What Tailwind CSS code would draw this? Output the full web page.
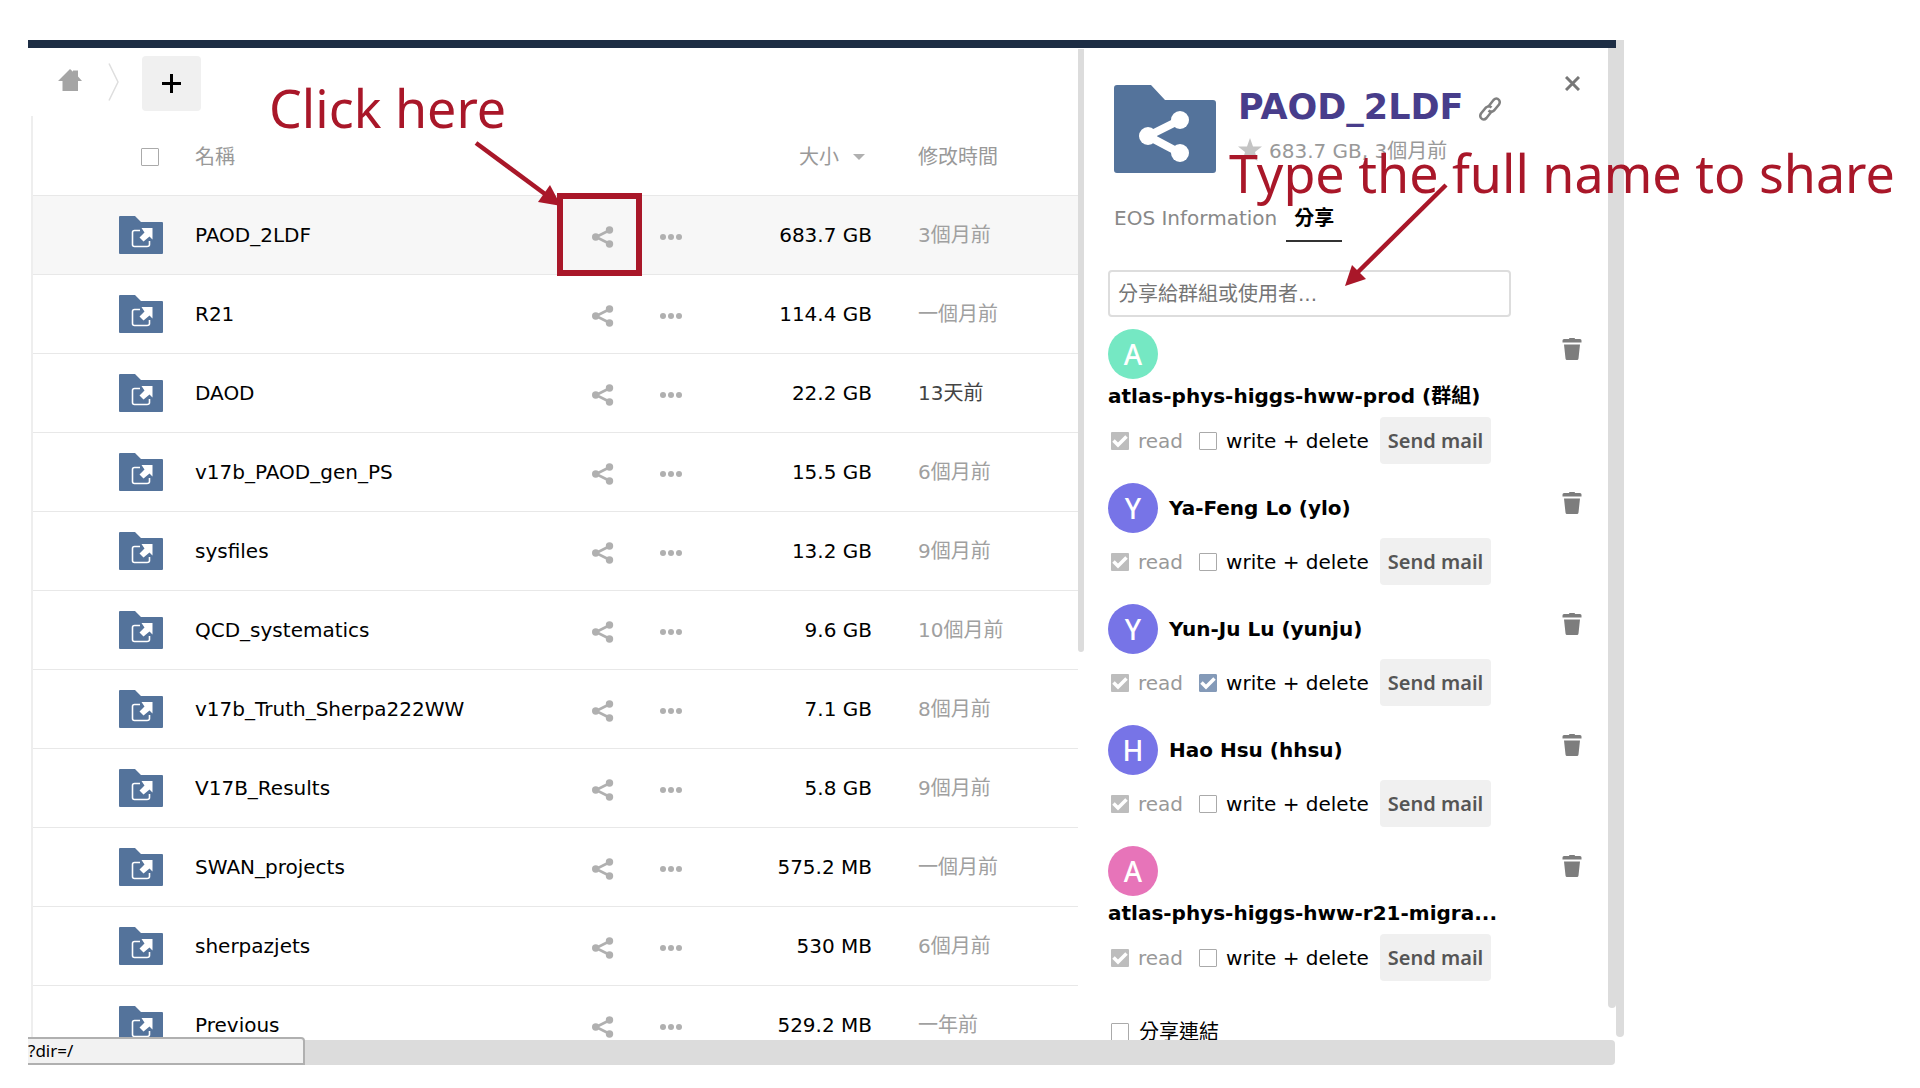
<!DOCTYPE html>
<html lang="zh-Hant">
<head>
<meta charset="utf-8">
<title>Files</title>
<script src="https://cdn.jsdelivr.net/npm/@tailwindcss/browser@4"></script>
</head>
<body class="bg-white text-black text-[20px] leading-[30px] font-['DejaVu_Sans','Noto_Sans_CJK_TC',sans-serif]">
<svg class="hidden">
  <symbol id="folder-link" viewBox="0 0 44 38">
    <path fill="#54739b" d="M1 0H16L22 6H43Q44 6 44 7V37Q44 38 43 38H1Q0 38 0 37V1Q0 0 1 0Z"/>
    <path fill="none" stroke="#fff" stroke-width="1.6" d="M21 14.500H15.500Q13.500 14.500 13.500 16.500V28.500Q13.500 30.500 15.500 30.500H28Q30.500 30.500 30.500 28.500V25"/>
    <path fill="#fff" d="M22.500 12H33.500V23.500L30.500 20.500L24.500 25.500L20.500 21.500L25.500 16.500Z"/>
  </symbol>
  <symbol id="share" viewBox="0 0 22 22">
    <path fill="none" stroke="currentColor" stroke-width="2.6" d="M18 4L4 11L18 18"/>
    <circle cx="17.500" cy="4" r="3.700" fill="currentColor"/><circle cx="3.700" cy="11" r="3.700" fill="currentColor"/><circle cx="17.500" cy="18" r="3.700" fill="currentColor"/>
  </symbol>
  <symbol id="dots" viewBox="0 0 22 6">
    <circle cx="3" cy="3" r="3" fill="currentColor"/><circle cx="11" cy="3" r="3" fill="currentColor"/><circle cx="19" cy="3" r="3" fill="currentColor"/>
  </symbol>
  <symbol id="trash" viewBox="0 0 20 22">
    <path fill="currentColor" d="M7 0.500Q7 0 8 0H12Q13 0 13 0.500V1H18Q19.500 1 19.500 2.500V4.500H0.500V2.500Q0.500 1 2 1H7ZM2 6.500H18L16.500 20.500Q16.300 22 15 22H5Q3.700 22 3.500 20.500Z"/>
  </symbol>
  <symbol id="check" viewBox="0 0 18 18"><path fill="none" stroke="#fff" stroke-width="3.500" d="M2.500 8.500L7 13L15.500 4.500"/></symbol>
</svg>

<div class="h-screen flex flex-col pt-[40px] pb-[23px] pl-[28px] pr-[296px] overflow-hidden">
  <div class="flex flex-1 min-h-0">
    <div class="flex flex-col flex-1 min-w-0">
      <header class="h-[8px] shrink-0 bg-[#1d2d44]"></header>
      <div class="flex flex-1 min-h-0">

        <main class="relative flex-1 min-w-0 overflow-hidden">
          <nav class="flex items-start h-[68px] pl-[30px] pt-[8px]">
            <a href="#" aria-label="Home" class="mt-[13px] text-[#a5a5a5]"><svg width="24" height="22" viewBox="0 0 24 22"><path fill="currentColor" d="M12 0L15 2.800V1.500H20V7.500L24 12H20V22H4.500V12H0Z"/></svg></a>
            <svg class="ml-[26px] mt-[7px]" width="11" height="38" viewBox="0 0 11 38"><path fill="none" stroke="#dedede" stroke-width="1.500" d="M1 0.500L10 19L1 37.500"/></svg>
            <button aria-label="New" class="ml-[23px] w-[59px] h-[55px] grid place-items-center rounded bg-[#f0f0f0]"><svg width="19" height="19" viewBox="0 0 19 19"><path stroke="#000" stroke-width="3" d="M9.500 0V19M0 9.500H19"/></svg></button>
          </nav>
          <div class="ml-[3px] border-l-2 border-[#eee]">
            <table class="w-full table-fixed border-collapse">
              <thead class="text-[#999]">
                <tr class="h-[79px] border-b border-[#e8e8e8]">
                  <th class="w-[162px] font-normal text-left pl-[108px] pt-1"><input type="checkbox" aria-label="Select all" class="block appearance-none size-[18px] border border-[#aaa] rounded-[1px]"></th>
                  <th class="font-normal text-left pt-1">名稱</th>
                  <th class="w-[85px]"></th>
                  <th class="w-[58px]"></th>
                  <th class="w-[172px] font-normal pt-1"><span class="flex items-center justify-end gap-[14px] pr-[7px]">大小<svg width="12" height="6" viewBox="0 0 12 6"><path fill="#b0b0b0" d="M0 0H12L6 6Z"/></svg></span></th>
                  <th class="w-[206px] font-normal text-left pl-[46px] pt-1">修改時間</th>
                </tr>
              </thead>
              <tbody id="files"></tbody>
            </table>
          </div>
          <div class="absolute left-[241px] top-[26px] text-[52px] leading-[68px] text-[#a91729] whitespace-nowrap font-['Chalkboard','Noto_Sans',cursive]">Click here</div>
          <svg class="absolute left-[442px] top-[90px] text-[#a91729]" width="90" height="70" viewBox="0 0 90 70"><path stroke="currentColor" stroke-width="4.500" d="M6 5L75 56"/><path fill="currentColor" d="M91 68L68 64L80 47Z"/></svg>
        </main>

        <aside class="relative w-[538px] shrink-0 flex">
          <div class="w-[6px] h-[603px] mt-px bg-[#dcdcdc] rounded-b"></div>
          <div class="flex-1 min-w-0 overflow-hidden pl-[24px] pt-[37px]">
            <div class="flex items-start pl-[6px]">
              <svg width="102" height="88" viewBox="0 0 102 88"><path fill="#54739b" d="M3 0H37L51 15H99Q102 15 102 18V85Q102 88 99 88H3Q0 88 0 85V3Q0 0 3 0Z"/><path fill="none" stroke="#fff" stroke-width="8" d="M66 35L34 51L66 68"/><g fill="#fff"><circle cx="66" cy="35" r="9"/><circle cx="34" cy="51" r="9"/><circle cx="66" cy="68" r="9"/></g></svg>
              <div class="ml-[22px]">
                <h2 class="flex items-center h-[44px] text-[35px] font-bold text-[#483d8b]">PAOD_2LDF
                  <a href="#" aria-label="Link" class="ml-[16px] mt-[4px] text-[#808080]"><svg width="22" height="24" viewBox="0 0 22 24" fill="none" stroke="currentColor" stroke-width="2.500"><path d="M9 10L14.500 3Q17.500 0 20 3Q21.500 5 20 7.500L15 13.500Q12 16 9.500 13.500"/><path d="M13 14L7.500 21Q4.500 24 2 21Q0.500 19 2 16.500L7 10.500Q10 8 12.500 10.500"/></svg></a></h2>
                <p class="flex items-center h-[44px] gap-[7px] text-[#999]"><svg class="mb-[4px]" width="24" height="23" viewBox="0 0 24 23"><path fill="#c4c4c4" d="M12 0L15 8.500H24L17 14L19.500 23L12 17.500L4.500 23L7 14L0 8.500H9Z"/></svg>683.7 GB, 3個月前</p>
              </div>
              <button aria-label="Close" class="ml-auto mr-[28px] -mt-[9px] text-[#777]"><svg width="15" height="15" viewBox="0 0 15 15"><path stroke="currentColor" stroke-width="3" d="M1 1L14 14M14 1L1 14"/></svg></button>
            </div>
            <div class="flex mt-[25px] pl-[6px] h-[44px] text-[#888]">
              <a href="#" class="leading-[40px] mr-[9px]">EOS Information</a>
              <a href="#" class="leading-[40px] px-[8px] font-bold text-black border-b-2 border-[#333]">分享</a>
            </div>
            <input type="text" aria-label="Share" placeholder="分享給群組或使用者..." class="block mt-[28px] w-[403px] h-[47px] px-[8px] border-2 border-[#ddd] rounded placeholder:text-[#757575]">
            <ul id="shares" class="mt-[12px]"></ul>
            <label class="flex items-center mt-[31px] ml-[3px] gap-[10px] h-[40px]"><input type="checkbox" class="appearance-none size-[18px] border border-[#aaa] rounded-[1px]">分享連結</label>
          </div>
          <div class="w-[8px] h-[960px] bg-[#dcdcdc] rounded-b"></div>
          <div class="absolute left-[151px] top-[91px] text-[52px] leading-[68px] text-[#a91729] whitespace-nowrap font-['Chalkboard','Noto_Sans',cursive]">Type the full name to share</div>
          <svg class="absolute left-[265px] top-[134px] text-[#a91729]" width="110" height="105" viewBox="0 0 110 105"><path stroke="currentColor" stroke-width="4.500" d="M103 3L14 91"/><path fill="currentColor" d="M2 104L9 83L23 97Z"/></svg>
        </aside>
      </div>
    </div>
    <div class="w-[8px] h-[997px] shrink-0 bg-[#dcdcdc] rounded-b"></div>
  </div>
  <footer class="relative h-[25px] shrink-0 mr-[9px] bg-[#dcdcdc] rounded-r">
    <div class="absolute left-0 bottom-0 w-[277px] h-[28px] overflow-hidden bg-[#f2f2f2] border-2 border-l-0 border-[#b0b0b0] rounded-tr text-[17px] leading-[24px] font-['Noto_Sans',sans-serif]">?dir=/</div>
  </footer>
</div>

<script>
const files = [
  ['PAOD_2LDF','683.7 GB','3個月前'],['R21','114.4 GB','一個月前'],['DAOD','22.2 GB','13天前'],
  ['v17b_PAOD_gen_PS','15.5 GB','6個月前'],['sysfiles','13.2 GB','9個月前'],['QCD_systematics','9.6 GB','10個月前'],
  ['v17b_Truth_Sherpa222WW','7.1 GB','8個月前'],['V17B_Results','5.8 GB','9個月前'],['SWAN_projects','575.2 MB','一個月前'],
  ['sherpazjets','530 MB','6個月前'],['Previous','529.2 MB','一年前']
];
document.getElementById('files').innerHTML = files.map(([name, size, date], i) => `
  <tr class="h-[79px] border-b border-[#e8e8e8] ${i === 0 ? 'bg-[#f7f7f7]' : ''}">
    <td class="pl-[86px]"><svg width="44" height="38"><use href="#folder-link"/></svg></td>
    <td><a href="#">${name}</a></td>
    <td class="relative text-[#b0b0b0]"><button aria-label="Share" class="block ml-[35px] mt-[5px]"><svg width="22" height="22"><use href="#share"/></svg></button>${i === 0 ? '<div class="absolute left-0 -top-[3px] w-[85px] h-[83px] border-6 border-[#a91729]"></div>' : ''}</td>
    <td class="text-[#b0b0b0]"><button aria-label="More" class="block ml-[18px] mt-[5px]"><svg width="22" height="6"><use href="#dots"/></svg></button></td>
    <td class="text-right">${size}</td>
    <td class="pl-[46px] ${i === 2 ? 'text-[#444]' : 'text-[#a0a0a0]'}">${date}</td>
  </tr>`).join('');

const shares = [
  ['A','bg-[#75e8c3]','atlas-phys-higgs-hww-prod (群組)',true,false],
  ['Y','bg-[#7774e7]','Ya-Feng Lo (ylo)',false,false],
  ['Y','bg-[#7774e7]','Yun-Ju Lu (yunju)',false,true],
  ['H','bg-[#7774e7]','Hao Hsu (hhsu)',false,false],
  ['A','bg-[#e774b9]','atlas-phys-higgs-hww-r21-migra...',true,false]
];
document.getElementById('shares').innerHTML = shares.map(([letter, color, name, wraps, write]) => `
  <li class="mb-[19px]">
    <div class="flex items-start">
      <div class="${wraps ? 'flex flex-col gap-[2px]' : 'flex items-center gap-[11px]'}">
        <span class="grid place-items-center size-[50px] rounded-full text-white text-[28px] font-medium font-['Noto_Sans',sans-serif] ${color}">${letter}</span>
        <span class="leading-[31px] font-bold whitespace-nowrap">${name}</span>
      </div>
      <button aria-label="Unshare" class="ml-auto mr-[26px] mt-[9px] text-[#7d7d7d]"><svg width="20" height="22"><use href="#trash"/></svg></button>
    </div>
    <div class="flex items-center mt-[5px] pl-[3px]">
      <label class="flex items-center gap-[9px] text-[#999]"><span class="grid place-items-center"><input type="checkbox" checked disabled class="appearance-none size-[18px] bg-[#bdbdbd] rounded-[1px] col-start-1 row-start-1"><svg class="col-start-1 row-start-1" width="18" height="18"><use href="#check"/></svg></span>read</label>
      <label class="flex items-center gap-[9px] ml-[16px]"><span class="grid place-items-center"><input type="checkbox" ${write ? 'checked' : ''} class="appearance-none size-[18px] border border-[#aaa] checked:border-[#849ab8] checked:bg-[#849ab8] rounded-[1px] col-start-1 row-start-1">${write ? '<svg class="col-start-1 row-start-1 pointer-events-none" width="18" height="18"><use href="#check"/></svg>' : ''}</span>write + delete</label>
      <button class="ml-[11px] h-[47px] px-[8px] rounded bg-[#f0f0f0] text-[#555] font-semibold font-['Noto_Sans',sans-serif]">Send mail</button>
    </div>
  </li>`).join('');
</script>
</body>
</html>
